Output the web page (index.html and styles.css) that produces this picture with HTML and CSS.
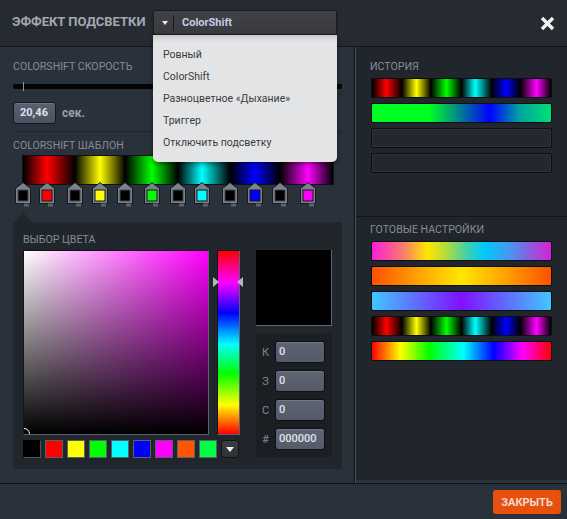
FILE: index.html
```html
<!DOCTYPE html>
<html lang="ru">
<head>
<meta charset="utf-8">
<title>Эффект подсветки</title>
<link rel="stylesheet" href="styles.css">
</head>
<body>
<svg class="defs" width="0" height="0" aria-hidden="true">
  <defs>
    <symbol id="stop-shape" viewBox="0 0 16 25">
      <path d="M0.5 6.5 L8 0.5 L15.5 6.5 L15.5 21.5 L0.5 21.5 Z" fill="#7b818d" stroke="#15181c"/>
      <rect x="9" y="21.5" width="5" height="3" fill="#5c626d"/>
    </symbol>
  </defs>
</svg>
<div class="app">
  <header class="top">
    <h1 class="title">ЭФФЕКТ ПОДСВЕТКИ</h1>
    <div class="select">
      <div class="select-btn">
        <span class="caret"></span>
        <span class="select-sep"></span>
        <span class="select-val">ColorShift</span>
      </div>
      <ul class="menu">
        <li>Ровный</li>
        <li>ColorShift</li>
        <li>Разноцветное «Дыхание»</li>
        <li>Триггер</li>
        <li>Отключить подсветку</li>
      </ul>
    </div>
    <button class="close-x" aria-label="Закрыть">
      <svg width="15" height="15" viewBox="0 0 15 15"><path d="M2 2 L13 13 M13 2 L2 13" stroke="#f1f1f1" stroke-width="3.4"/></svg>
    </button>
  </header>

  <main class="body">
    <section class="left">
      <div class="speed">
        <div class="label">COLORSHIFT СКОРОСТЬ</div>
        <div class="slider"><span class="tick"></span></div>
        <div class="speed-row">
          <div class="num">20,46</div>
          <span class="unit">сек.</span>
        </div>
      </div>

      <div class="template">
        <div class="label">COLORSHIFT ШАБЛОН</div>
        <div class="tpl-bar"></div>
        <div class="stops">
          <svg class="stop" style="left:2px" viewBox="0 0 16 25"><use href="#stop-shape"/><rect x="3" y="8" width="10" height="11" fill="#000" stroke="#44484f"/></svg>
          <svg class="stop" style="left:26px" viewBox="0 0 16 25"><use href="#stop-shape"/><rect x="3" y="8" width="10" height="11" fill="#ff0000" stroke="#15181c"/></svg>
          <svg class="stop" style="left:54px" viewBox="0 0 16 25"><use href="#stop-shape"/><rect x="3" y="8" width="10" height="11" fill="#000" stroke="#44484f"/></svg>
          <svg class="stop" style="left:79px" viewBox="0 0 16 25"><use href="#stop-shape"/><rect x="3" y="8" width="10" height="11" fill="#ffff00" stroke="#15181c"/></svg>
          <svg class="stop" style="left:104px" viewBox="0 0 16 25"><use href="#stop-shape"/><rect x="3" y="8" width="10" height="11" fill="#000" stroke="#44484f"/></svg>
          <svg class="stop" style="left:131px" viewBox="0 0 16 25"><use href="#stop-shape"/><rect x="3" y="8" width="10" height="11" fill="#00ff00" stroke="#15181c"/></svg>
          <svg class="stop" style="left:157px" viewBox="0 0 16 25"><use href="#stop-shape"/><rect x="3" y="8" width="10" height="11" fill="#000" stroke="#44484f"/></svg>
          <svg class="stop" style="left:181px" viewBox="0 0 16 25"><use href="#stop-shape"/><rect x="3" y="8" width="10" height="11" fill="#00ffff" stroke="#15181c"/></svg>
          <svg class="stop" style="left:209px" viewBox="0 0 16 25"><use href="#stop-shape"/><rect x="3" y="8" width="10" height="11" fill="#000" stroke="#44484f"/></svg>
          <svg class="stop" style="left:234px" viewBox="0 0 16 25"><use href="#stop-shape"/><rect x="3" y="8" width="10" height="11" fill="#0000ff" stroke="#15181c"/></svg>
          <svg class="stop" style="left:259px" viewBox="0 0 16 25"><use href="#stop-shape"/><rect x="3" y="8" width="10" height="11" fill="#000" stroke="#44484f"/></svg>
          <svg class="stop" style="left:287px" viewBox="0 0 16 25"><use href="#stop-shape"/><rect x="3" y="8" width="10" height="11" fill="#ff00ff" stroke="#15181c"/></svg>
        </div>
        <div class="pointer"></div>
      </div>

      <div class="picker">
        <div class="label">ВЫБОР ЦВЕТА</div>
        <div class="picker-main">
          <div class="picker-col">
            <div class="sv-row">
              <div class="sv"><span class="sv-dot"></span></div>
              <div class="hue">
                <span class="hue-arrow hue-arrow-l"></span>
                <span class="hue-arrow hue-arrow-r"></span>
              </div>
            </div>
            <div class="swatches">
              <span class="sw sw-black"></span>
              <span class="sw sw-red"></span>
              <span class="sw sw-yellow"></span>
              <span class="sw sw-green"></span>
              <span class="sw sw-cyan"></span>
              <span class="sw sw-blue"></span>
              <span class="sw sw-magenta"></span>
              <span class="sw sw-orange"></span>
              <span class="sw sw-green2"></span>
              <span class="sw-more"><span class="sw-more-tri"></span></span>
            </div>
          </div>
          <div class="value-col">
            <div class="preview"></div>
            <div class="fields">
              <div class="field"><span class="f-label">К</span><span class="f-input">0</span></div>
              <div class="field"><span class="f-label">З</span><span class="f-input">0</span></div>
              <div class="field"><span class="f-label">С</span><span class="f-input">0</span></div>
              <div class="field"><span class="f-label">#</span><span class="f-input">000000</span></div>
            </div>
          </div>
        </div>
      </div>
    </section>

    <aside class="right">
      <div class="right-inner">
        <div class="history">
          <div class="label">ИСТОРИЯ</div>
          <div class="bars">
            <div class="bar g-shift"></div>
            <div class="bar g-hist2"></div>
            <div class="bar bar-empty"></div>
            <div class="bar bar-empty"></div>
          </div>
        </div>
        <div class="presets">
          <div class="label">ГОТОВЫЕ НАСТРОЙКИ</div>
          <div class="bars">
            <div class="bar g-p1"></div>
            <div class="bar g-p2"></div>
            <div class="bar g-p3"></div>
            <div class="bar g-shift"></div>
            <div class="bar g-p5"></div>
          </div>
        </div>
      </div>
    </aside>
  </main>

  <footer class="foot">
    <button class="btn-close">ЗАКРЫТЬ</button>
  </footer>
</div>
</body>
</html>
```

FILE: styles.css
```css
* { box-sizing: border-box; margin: 0; padding: 0; }

html, body { background: #262b32; }
body { margin: 0; font-family: Roboto, "Liberation Sans", Arial, sans-serif; }

.defs { position: absolute; width: 0; height: 0; overflow: hidden; }

.app {
  width: 567px;
  height: 519px;
  display: flex;
  flex-direction: column;
  overflow: hidden;
  background: #29313a;
}

/* ---------- header ---------- */
.top {
  height: 47px;
  flex: none;
  display: flex;
  align-items: flex-start;
  padding: 10px 12px 0 12px;
  background: #262b32;
  border-bottom: 1px solid #121519;
}
.title {
  width: 141px;
  font-size: 13px;
  line-height: 24px;
  font-weight: 700;
  color: #a3a8b1;
  white-space: nowrap;
}
.select { position: relative; width: 184px; z-index: 5; }
.select-btn {
  height: 25px;
  display: flex;
  align-items: center;
  background: linear-gradient(#414246, #393a3d);
  border: 1px solid #1a1b1e;
  border-radius: 2px;
  box-shadow: 0 1px 2px rgba(0,0,0,.45);
}
.caret {
  width: 0; height: 0;
  margin-left: 8px;
  border-left: 3px solid transparent;
  border-right: 3px solid transparent;
  border-top: 4px solid #f0f0f0;
}
.select-sep {
  width: 1px;
  height: 16px;
  margin-left: 5px;
  background: #17181a;
}
.select-val {
  margin-left: 8px;
  font-size: 11px;
  font-weight: 700;
  color: #c6cbe6;
}
.menu {
  list-style: none;
  position: absolute;
  top: 25px;
  left: 0;
  width: 184px;
  padding: 9px 0 8px 10px;
  background: linear-gradient(#c9cacd 0, #e3e4e6 7px, #e3e4e6 100%);
  border-radius: 0 0 5px 5px;
  box-shadow: 0 2px 5px rgba(0,0,0,.45);
}
.menu li {
  height: 22px;
  line-height: 22px;
  font-size: 10.5px;
  color: #3a3b3d;
  white-space: nowrap;
}
.close-x {
  margin-left: auto;
  margin-top: 6px;
  margin-right: 0;
  width: 15px;
  height: 15px;
  background: none;
  border: 0;
  display: flex;
}

/* ---------- body ---------- */
.body {
  flex: 1;
  display: flex;
  min-height: 0;
}
.label {
  font-size: 10.6px;
  line-height: 13px;
  color: #868c96;
  white-space: nowrap;
}

.left {
  width: 355px;
  flex: none;
  padding: 13px 12px 0 13px;
  background: #29313a;
  border-right: 1px solid #111418;
}

.speed {
  padding-bottom: 7px;
  border-bottom: 1px solid #22272e;
}
.slider {
  position: relative;
  margin-top: 11px;
  height: 5px;
  background: #040404;
  border-radius: 2px;
}
.tick {
  position: absolute;
  left: 10px;
  top: -2px;
  width: 1px;
  height: 9px;
  background: #8f949c;
}
.speed-row {
  margin-top: 13px;
  display: flex;
  align-items: center;
  gap: 6px;
}
.num {
  width: 43px;
  height: 22px;
  padding-left: 6px;
  line-height: 20px;
  font-size: 11px;
  font-weight: 700;
  color: #dde0ea;
  background: linear-gradient(#5b6071, #4c5161);
  border: 1px solid #14171b;
  border-radius: 3px;
  box-shadow: inset 0 1px 0 #6f7486;
}
.unit {
  font-size: 12px;
  font-weight: 700;
  color: #9aa0a9;
}

.template { padding-top: 7px; }
.tpl-bar {
  margin: 3px 0 0 9px;
  width: 312px;
  height: 30px;
  border: 1px solid #0e1013;
  background: linear-gradient(to right,
    #000 0px, #ff0000 24px, #000 52px, #ffff00 77px, #000 102px,
    #00ff00 129px, #000 155px, #00ffff 179px, #000 207px,
    #0000ff 232px, #000 257px, #ff00ff 285px, #000 310px);
}
.stops {
  position: relative;
  height: 24px;
  margin-top: -3px;
}
.stop {
  position: absolute;
  top: 0;
  width: 16px;
  height: 25px;
}
.pointer {
  width: 0;
  height: 0;
  margin: 6px 0 0 2px;
  border-left: 8px solid transparent;
  border-right: 8px solid transparent;
  border-bottom: 10px solid #21262d;
}

/* ---------- picker ---------- */
.picker {
  width: 329px;
  height: 247px;
  padding: 11px 10px 0 10px;
  background: #21262d;
}
.picker-main {
  margin-top: 4px;
  display: flex;
  gap: 16px;
}
.picker-col { width: 217px; }
.sv-row {
  display: flex;
  gap: 8px;
}
.sv {
  position: relative;
  width: 186px;
  height: 185px;
  overflow: hidden;
  border: 1px solid;
  border-color: #101215 #5b6170 #5b6170 #101215;
  background:
    linear-gradient(to top, #000, rgba(0,0,0,0)),
    linear-gradient(to right, #fff, #ff00ff);
}
.sv-dot {
  position: absolute;
  left: -6px;
  bottom: -6px;
  width: 12px;
  height: 12px;
  border: 1.5px solid #fff;
  border-radius: 50%;
}
.hue {
  position: relative;
  width: 23px;
  height: 185px;
  border: 1px solid;
  border-color: #101215 #5b6170 #5b6170 #101215;
  background: linear-gradient(to bottom,
    #ff0000 0%, #ff00ff 17%, #0000ff 34%, #00ffff 51%,
    #00ff00 67%, #ffff00 84%, #ff0000 100%);
}
.hue-arrow {
  position: absolute;
  top: 26px;
  width: 0;
  height: 0;
  border-top: 5px solid transparent;
  border-bottom: 5px solid transparent;
}
.hue-arrow-l { left: -5px; border-left: 6px solid #b3b7bf; }
.hue-arrow-r { right: -4px; border-right: 6px solid #b3b7bf; }

.swatches {
  margin-top: 5px;
  display: flex;
  gap: 4px;
}
.sw {
  width: 18px;
  height: 18px;
  border: 1px solid #5a606c;
}
.sw-black { background: #000; border-color: #000 #4d525c #4d525c #000; }
.sw-red { background: #ff0000; }
.sw-yellow { background: #ffff00; }
.sw-green { background: #00ff00; }
.sw-cyan { background: #00ffff; }
.sw-blue { background: #0000ff; }
.sw-magenta { background: #ff00ff; }
.sw-orange { background: #ff5500; }
.sw-green2 { background: #00ff44; }
.sw-more {
  width: 18px;
  height: 18px;
  display: flex;
  align-items: center;
  justify-content: center;
  background: linear-gradient(#3c3d40, #2f3033);
  border: 1px solid #111316;
  border-radius: 3px;
}
.sw-more-tri {
  width: 0; height: 0;
  border-left: 4px solid transparent;
  border-right: 4px solid transparent;
  border-top: 5px solid #f2f2f2;
}

.value-col { width: 76px; }
.preview {
  width: 76px;
  height: 76px;
  background: #000;
  border-right: 1px solid #5f6574;
  border-bottom: 1px solid #5f6574;
}
.fields {
  margin-top: 8px;
  padding: 7px 0;
  display: flex;
  flex-direction: column;
  gap: 7px;
  background: #1b1e23;
}
.field {
  display: flex;
  align-items: center;
}
.f-label {
  width: 19px;
  text-align: center;
  font-size: 11px;
  color: #838993;
}
.f-input {
  width: 50px;
  height: 22px;
  padding-left: 3px;
  line-height: 20px;
  font-size: 11px;
  font-weight: 500;
  color: #e1e4ed;
  background: linear-gradient(#5f6474, #555a69);
  border: 1px solid #0d0f12;
  border-radius: 3px;
  box-shadow: inset 0 1px 0 #727788;
}

/* ---------- right ---------- */
.right {
  width: 212px;
  flex: none;
  display: flex;
  padding-bottom: 3px;
  background: #2a323b;
  border-left: 1px solid #4a515a;
}
.right-inner {
  flex: 1;
  display: flex;
  flex-direction: column;
  background: #21262d;
}
.history {
  height: 170px;
  padding: 13px 15px 0 15px;
  border-bottom: 1px solid #121519;
}
.presets {
  flex: 1;
  padding: 6px 15px 0 15px;
}
.history .label, .presets .label { margin-left: -1px; }
.bars {
  margin-top: 5px;
  display: flex;
  flex-direction: column;
  gap: 5px;
}
.bar {
  height: 20px;
  border: 1px solid #0c0e11;
  border-radius: 2px;
}
.bar-empty {
  background: #24282e;
  box-shadow: inset 0 0 0 1px #2d3239;
}
.g-shift {
  background: linear-gradient(to right,
    #000 0%, #ff0000 8%, #000 16.8%, #ffff00 24.8%, #000 32.9%,
    #00ff00 41.6%, #000 50%, #00ffff 57.7%, #000 66.8%,
    #0000ff 74.8%, #000 82.9%, #ff00ff 91.9%, #000 100%);
}
.g-hist2 {
  background: linear-gradient(to right,
    #00ff22 0%, #00ff22 32%, #0000ff 66%, #00a0a0 82%, #00e070 100%);
}
.g-p1 {
  background: linear-gradient(to right,
    #fa1ddc 0%, #f87a70 17%, #ffe600 31%, #b0dc40 42%, #40d0a8 53%,
    #00c8ff 63%, #4896f0 77%, #9058e0 89%, #d822d4 100%);
}
.g-p2 {
  background: linear-gradient(to right,
    #ff5000 0%, #ffa000 25%, #ffe600 50%, #ffa000 75%, #ff5000 100%);
}
.g-p3 {
  background: linear-gradient(to right,
    #40c8ff 0%, #8010ff 50%, #40c8ff 100%);
}
.g-p5 {
  background: linear-gradient(to right,
    #ff0000 0%, #ffff00 16%, #00ff00 32%, #00ffff 51%,
    #0000ff 68%, #ff00ff 84%, #ff0000 100%);
}

/* ---------- footer ---------- */
.foot {
  height: 36px;
  flex: none;
  display: flex;
  justify-content: flex-end;
  align-items: flex-start;
  padding: 6px 6px 0 0;
  background: #29313a;
  border-top: 1px solid #121519;
}
.btn-close {
  width: 68px;
  height: 24px;
  border: 0;
  border-radius: 3px;
  background: #e8500e;
  color: #f3dcd3;
  font-family: Roboto, "Liberation Sans", Arial, sans-serif;
  font-size: 11px;
  font-weight: 700;
}
```
